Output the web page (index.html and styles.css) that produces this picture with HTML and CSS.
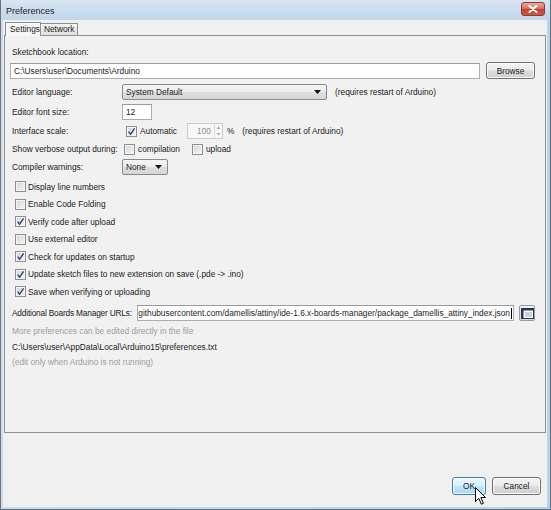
FILE: index.html
```html
<!DOCTYPE html>
<html>
<head>
<meta charset="utf-8">
<title>Preferences</title>
<link rel="stylesheet" href="styles.css">
</head>
<body>
<div class="window">
  <div class="titlebar">
    <span class="title">Preferences</span>
    <span class="close">
      <svg width="10" height="8" viewBox="0 0 10 8"><path d="M1.5 1 L8.5 7 M8.5 1 L1.5 7" stroke="#fff" stroke-width="2" stroke-linecap="round"/></svg>
    </span>
  </div>
  <div class="client">
    <div class="tabs">
      <div class="tab active">Settings</div>
      <div class="tab">Network</div>
    </div>
    <div class="panel">
      <div class="lbl-top">Sketchbook location:</div>
      <div class="row loc">
        <div class="field grow">C:\Users\user\Documents\Arduino</div>
        <div class="btn browse">Browse</div>
      </div>

      <div class="row form r-lang">
        <span class="lbl">Editor language:</span>
        <div class="combo lang"><span>System Default</span><svg width="7" height="4" viewBox="0 0 7 4"><path d="M0 0 H7 L3.5 4 Z" fill="#111"/></svg></div>
        <span class="note">(requires restart of Arduino)</span>
      </div>

      <div class="row form r-font">
        <span class="lbl">Editor font size:</span>
        <div class="field size">12</div>
      </div>

      <div class="row form r-scale">
        <span class="lbl">Interface scale:</span>
        <span class="cb checked cb-auto"><svg width="9" height="9" viewBox="0 0 9 9"><path d="M1.6 4.6 L3.6 7.2 L7.6 1.4" stroke="#3a4c86" stroke-width="1.5" fill="none"/></svg></span>
        <span class="cbl">Automatic</span>
        <div class="spin">
          <span class="val">100</span>
          <span class="arrows">
            <svg width="7" height="7" viewBox="0 0 7 7"><path d="M1.5 5 L3.5 2.5 L5.5 5 Z" fill="#aaa"/></svg>
            <svg width="7" height="7" viewBox="0 0 7 7"><path d="M1.5 2 L3.5 4.5 L5.5 2 Z" fill="#aaa"/></svg>
          </span>
        </div>
        <span class="pct">%</span>
        <span class="note2">(requires restart of Arduino)</span>
      </div>

      <div class="row form r-verbose">
        <span class="lbl">Show verbose output during:</span>
        <span class="cb cb-comp"></span>
        <span class="cbl">compilation</span>
        <span class="cb cb-up"></span>
        <span class="cbl">upload</span>
      </div>

      <div class="row form r-warn">
        <span class="lbl">Compiler warnings:</span>
        <div class="combo warn"><span>None</span><svg width="7" height="4" viewBox="0 0 7 4"><path d="M0 0 H7 L3.5 4 Z" fill="#111"/></svg></div>
      </div>

      <div class="checks">
        <div class="crow"><span class="cb"></span><span class="cbl">Display line numbers</span></div>
        <div class="crow"><span class="cb"></span><span class="cbl">Enable Code Folding</span></div>
        <div class="crow"><span class="cb checked"><svg width="9" height="9" viewBox="0 0 9 9"><path d="M1.6 4.6 L3.6 7.2 L7.6 1.4" stroke="#3a4c86" stroke-width="1.5" fill="none"/></svg></span><span class="cbl">Verify code after upload</span></div>
        <div class="crow"><span class="cb"></span><span class="cbl">Use external editor</span></div>
        <div class="crow"><span class="cb checked"><svg width="9" height="9" viewBox="0 0 9 9"><path d="M1.6 4.6 L3.6 7.2 L7.6 1.4" stroke="#3a4c86" stroke-width="1.5" fill="none"/></svg></span><span class="cbl">Check for updates on startup</span></div>
        <div class="crow"><span class="cb checked"><svg width="9" height="9" viewBox="0 0 9 9"><path d="M1.6 4.6 L3.6 7.2 L7.6 1.4" stroke="#3a4c86" stroke-width="1.5" fill="none"/></svg></span><span class="cbl">Update sketch files to new extension on save (.pde -&gt; .ino)</span></div>
        <div class="crow"><span class="cb checked"><svg width="9" height="9" viewBox="0 0 9 9"><path d="M1.6 4.6 L3.6 7.2 L7.6 1.4" stroke="#3a4c86" stroke-width="1.5" fill="none"/></svg></span><span class="cbl">Save when verifying or uploading</span></div>
      </div>

      <div class="row form r-url">
        <span class="lbl url-lbl">Additional Boards Manager URLs:</span>
        <div class="field url"><span>githubusercontent.com/damellis/attiny/ide-1.6.x-boards-manager/package_damellis_attiny_index.json</span><span class="caret"></span></div>
        <div class="iconbtn">
          <svg width="13" height="11" viewBox="0 0 13 11">
            <rect x="0.5" y="0.5" width="12" height="10" fill="#fff" stroke="#2c3650"/>
            <path d="M0.5 0.5 H12.5 V2.5 H2.5 V10.5 H0.5 Z" fill="#2c3650"/>
            <rect x="4" y="4" width="7" height="5" fill="#c9d3e3"/>
          </svg>
        </div>
      </div>

      <div class="muted m1">More preferences can be edited directly in the file</div>
      <div class="path">C:\Users\user\AppData\Local\Arduino15\preferences.txt</div>
      <div class="muted m2">(edit only when Arduino is not running)</div>
    </div>
    <div class="footer">
      <div class="btn ok">OK</div>
      <div class="btn cancel">Cancel</div>
    </div>
  </div>
  <svg class="cursor" width="12" height="19" viewBox="0 0 12 19">
    <path d="M0.5 0.5 L0.5 14.5 L3.8 11.3 L6.3 17.2 L8.4 16.3 L5.9 10.5 L10.5 10.5 Z" fill="#fff" stroke="#000" stroke-width="1" stroke-linejoin="miter"/>
  </svg>
</div>
</body>
</html>
```

FILE: styles.css
```css
* { box-sizing: border-box; }
html, body { margin: 0; padding: 0; }
body {
  width: 551px;
  height: 510px;
  overflow: hidden;
  font-family: "Liberation Sans", Arial, sans-serif;
  font-size: 8.3px;
  color: #1b1b1b;
  background: #f0f0f0;
}
.window {
  position: relative;
  width: 551px;
  height: 510px;
  display: flex;
  flex-direction: column;
  border-left: 1px solid #6e7479;
  border-right: 1px solid #4e7490;
  border-bottom: 1px solid #4e7490;
  background: linear-gradient(to right, #cfdbe6, #bdd0e4);
}
.titlebar {
  height: 20px;
  flex: none;
  display: flex;
  align-items: center;
  justify-content: space-between;
  padding: 0 5px 0 5px;
  background: linear-gradient(#d8e5f2, #c1d5ea);
}
.title { font-size: 9px; color: #1d1d1d; padding-top: 1px; }
.close {
  width: 24px;
  height: 14px;
  margin-top: -2px;
  border: 1px solid #8c3d33;
  border-radius: 3px;
  background: linear-gradient(#eaa99d, #d56e5f 48%, #c2432f 52%, #cc5a45);
  display: flex;
  align-items: center;
  justify-content: center;
}
.client {
  flex: 1;
  margin: 0 3px 2px 2px;
  background: #f0f0f0;
  display: flex;
  flex-direction: column;
}
.tabs {
  height: 15px;
  flex: none;
  display: flex;
  align-items: flex-end;
  padding-left: 2px;
}
.tab {
  height: 12px;
  line-height: 11px;
  padding: 0 3px;
  border: 1px solid #8e8f8f;
  border-bottom: none;
  border-left: none;
  background: linear-gradient(#f3f3f3, #e0e0e0);
}
.tab.active {
  height: 14px;
  line-height: 13px;
  width: 36px;
  padding: 0 4px;
  border-left: 1px solid #8e8f8f;
  background: #f7f7f7;
  margin-bottom: -1px;
  position: relative;
  z-index: 1;
}
.panel {
  flex: none;
  height: 398px;
  margin: 0 1px;
  border: 1px solid #8e8f8f;
  background: #f1f1f1;
  padding: 0 10px 0 5px;
  display: flex;
  flex-direction: column;
}
.lbl-top { height: 12px; line-height: 12px; margin: 10px 0 0 2px; }
.row { display: flex; align-items: center; flex: none; }
.loc { margin-top: 4px; height: 17px; gap: 6px; }
.grow { flex: 1; }
.field {
  height: 16px;
  border: 1px solid #abadb3;
  border-top-color: #999ba1;
  background: #fff;
  padding-left: 3px;
  display: flex;
  align-items: center;
  white-space: nowrap;
  overflow: hidden;
}
.btn {
  height: 17px;
  border: 1px solid #707070;
  border-radius: 3px;
  background: linear-gradient(#f3f3f3, #ebebeb 48%, #dddddd 52%, #cfcfcf);
  box-shadow: inset 0 0 0 1px #fbfbfb;
  display: flex;
  align-items: center;
  justify-content: center;
}
.browse { width: 49px; }
.form { height: 16px; }
.lbl { width: 110px; margin-left: 2px; flex: none; white-space: nowrap; }
.r-lang { margin-top: 5px; }
.r-font { margin-top: 4px; }
.r-scale { margin-top: 3px; }
.r-verbose { margin-top: 2px; }
.r-warn { margin-top: 2px; }
.combo {
  height: 16px;
  border: 1px solid #8a8a8a;
  border-radius: 2px;
  background: linear-gradient(#f4f4f4, #ececec 48%, #dedede 52%, #d6d6d6);
  display: flex;
  align-items: center;
  justify-content: space-between;
  padding: 0 5px 0 3px;
}
.lang { width: 205px; }
.warn { width: 46px; }
.note { margin-left: 8px; }
.size { width: 30px; }
.cb {
  width: 11px;
  height: 11px;
  flex: none;
  border: 1px solid #8e8f8f;
  background: linear-gradient(135deg, #d2d4d8, #f6f6f6);
  box-shadow: inset 0 0 0 1px #f4f4f4;
  display: flex;
  align-items: center;
  justify-content: center;
}
.cbl { margin-left: 3px; white-space: nowrap; }
.cb-auto { margin-left: 4px; }
.spin {
  margin-left: 10px;
  width: 36px;
  height: 16px;
  border: 1px solid #cdcdcd;
  background: #f7f7f7;
  display: flex;
  align-items: center;
  justify-content: flex-end;
  color: #8f8f8f;
}
.val { margin-right: 3px; }
.arrows {
  width: 8px;
  height: 14px;
  display: flex;
  flex-direction: column;
  border-left: 1px solid #dddddd;
}
.arrows svg { display: block; }
.pct { margin-left: 4px; }
.note2 { margin-left: 8px; }
.cb-comp { margin-left: 2px; }
.cb-up { margin-left: 12px; }
.checks { margin-top: 3px; display: flex; flex-direction: column; }
.crow { height: 17.5px; display: flex; align-items: center; padding-left: 5px; }
.crow .cbl { margin-left: 2px; }
.r-url { margin-top: 4.5px; }
.url-lbl { width: 125px; letter-spacing: -0.18px; }
.url { width: 377px; flex: none; justify-content: flex-end; padding: 0 1px 0 0; }
.url span { flex: none; }
.caret { width: 1px; height: 11px; background: #000; margin-left: 1px; }
.iconbtn {
  margin-left: 5px;
  width: 17px;
  height: 16px;
  border: 1px solid #9a9a9a;
  border-radius: 2px;
  background: linear-gradient(#f4f4f4, #dcdcdc);
  display: flex;
  align-items: center;
  justify-content: center;
}
.muted { color: #9d9d9d; }
.m1, .path, .m2 { height: 12px; line-height: 12px; margin-left: 2px; flex: none; }
.m1 { margin-top: 4px; }
.path { margin-top: 4px; }
.m2 { margin-top: 3px; }
.footer {
  flex: 1;
  display: flex;
  justify-content: flex-end;
  align-items: flex-end;
  gap: 6px;
  padding: 0 6px 12px 0;
}
.ok {
  width: 34px;
  height: 18px;
  border-color: #3c7fb1;
  background: linear-gradient(#eaf6fd, #d9f0fc 48%, #bee6fd 52%, #a7d9f5);
}
.cancel { width: 49px; height: 18px; }
.cursor { position: absolute; left: 474px; top: 487px; }
```
